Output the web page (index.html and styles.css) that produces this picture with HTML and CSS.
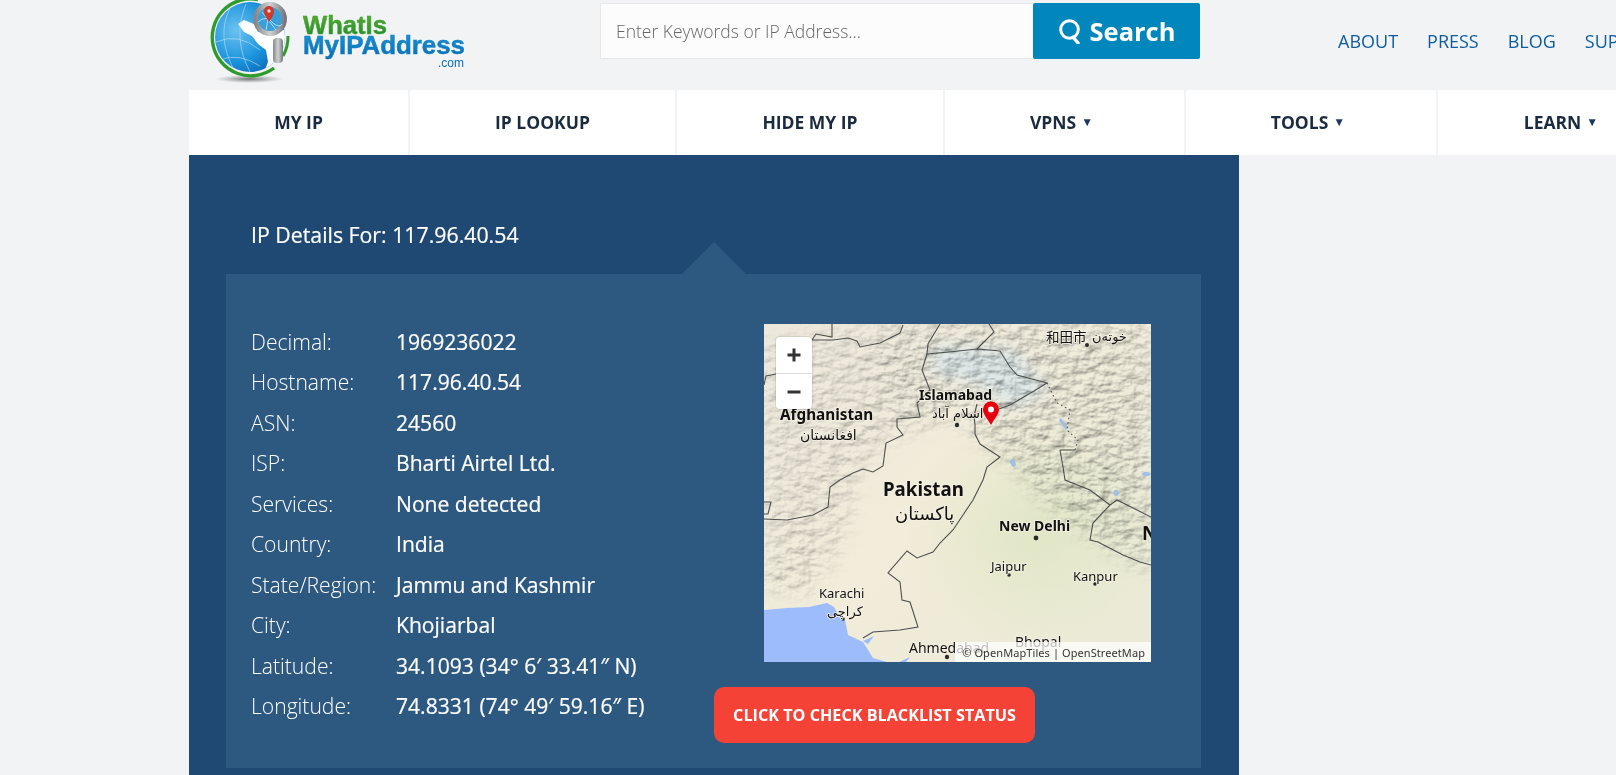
FILE: index.html
```html
<!DOCTYPE html>
<html lang="en">
<head>
<meta charset="utf-8">
<title>IP Details For: 117.96.40.54</title>
<link rel="stylesheet" href="styles.css">
</head>
<body>
<div class="page">
  <header class="top">
    <a class="logo" href="#" aria-label="WhatIsMyIPAddress.com">
      <svg class="logo-svg" width="270" height="90" viewBox="0 0 270 90">
        <defs>
          <radialGradient id="globe" cx="30%" cy="40%" r="75%">
            <stop offset="0" stop-color="#6cc2f0"/>
            <stop offset=".6" stop-color="#1b93dc"/>
            <stop offset="1" stop-color="#0c66b2"/>
          </radialGradient>
          <radialGradient id="shadow">
            <stop offset="0" stop-color="#555" stop-opacity=".8"/>
            <stop offset="1" stop-color="#777" stop-opacity="0"/>
          </radialGradient>
          <linearGradient id="steel" x1="0" x2="1" y1="0" y2="0">
            <stop offset="0" stop-color="#85888b"/>
            <stop offset=".5" stop-color="#cfd1d3"/>
            <stop offset="1" stop-color="#77797c"/>
          </linearGradient>
          <linearGradient id="wordblue" x1="0" x2="0" y1="0" y2="1">
            <stop offset="0" stop-color="#1b95d6"/>
            <stop offset="1" stop-color="#0b6cb3"/>
          </linearGradient>
          <linearGradient id="wordgreen" x1="0" x2="0" y1="0" y2="1">
            <stop offset="0" stop-color="#5cb130"/>
            <stop offset="1" stop-color="#1f8a2c"/>
          </linearGradient>
          <clipPath id="globe-clip"><circle cx="42" cy="37" r="35"/></clipPath>
        </defs>
        <ellipse cx="41" cy="79" rx="34" ry="4" fill="url(#shadow)"/>
        <circle cx="42" cy="37" r="35" fill="url(#globe)"/>
        <g clip-path="url(#globe-clip)">
          <path d="M30 24 L36 20 L46 24 L50 32 L56 32 L54 26 L62 28 L78 30 L78 72 L56 72 L60 62 L58 50 L50 44 L44 36 L36 32 Z" fill="#fff"/>
          <g fill="none" stroke="#bfe3f7" stroke-width=".7" opacity=".85">
            <path d="M8 42 Q30 32 52 50 M12 60 Q30 52 52 66 M22 8 Q8 36 26 70 M38 4 Q24 38 42 72"/>
          </g>
        </g>
        <path d="M50 -0.5 A38.5 38.5 0 1 0 66 68" fill="none" stroke="#2e9b2c" stroke-width="3.4"/>
        <path d="M80 36 A38.5 38.5 0 0 1 75 56" fill="none" stroke="#2e9b2c" stroke-width="3"/>
        <circle cx="62" cy="19" r="14.5" fill="#3a9ed8" stroke="url(#steel)" stroke-width="5"/>
        <path d="M50 22 Q58 14 66 24 Q72 28 74 24 M54 12 L68 30 M62 8 L58 30" fill="none" stroke="#cfe9f7" stroke-width=".8"/>
        <path d="M61 22 C57 16 56 14 56 11 A5 5 0 0 1 66 11 C66 14 65 16 61 22 Z" fill="#cf3a2e"/>
        <circle cx="61" cy="11" r="1.7" fill="#f5d9d0"/>
        <rect x="65" y="38" width="10" height="25" rx="4" fill="url(#steel)"/>
        <text class="logo-what" x="95" y="34" textLength="84" lengthAdjust="spacingAndGlyphs">WhatIs</text>
        <text class="logo-my" x="95" y="54" textLength="162" lengthAdjust="spacingAndGlyphs">MyIPAddress</text>
        <text class="logo-com" x="230" y="67">.com</text>
      </svg>
    </a>
    <form class="search">
      <input class="search-input" type="text" placeholder="Enter Keywords or IP Address...">
      <button class="search-btn" type="button">
        <svg class="search-icon" width="24" height="26" viewBox="0 0 24 26"><circle cx="11.5" cy="11.5" r="8.8" fill="none" stroke="#fff" stroke-width="3"/><path d="M15 19 L20 25" stroke="#fff" stroke-width="3.4" stroke-linecap="round"/></svg>
        Search
      </button>
    </form>
    <nav class="toplinks">
      <a href="#">ABOUT</a><a href="#">PRESS</a><a href="#">BLOG</a><a href="#">SUPPORT</a>
    </nav>
  </header>

  <nav class="mainnav">
    <a class="nav-cell w1" href="#">MY IP</a>
    <a class="nav-cell w2" href="#">IP LOOKUP</a>
    <a class="nav-cell w3" href="#">HIDE MY IP</a>
    <a class="nav-cell w4" href="#">VPNS<span class="caret">▼</span></a>
    <a class="nav-cell w5" href="#">TOOLS<span class="caret">▼</span></a>
    <a class="nav-cell w6" href="#">LEARN<span class="caret">▼</span></a>
  </nav>

  <main class="main">
    <h1 class="title">IP Details For: 117.96.40.54</h1>
    <section class="panel">
      <dl class="details">
        <dt>Decimal:</dt><dd>1969236022</dd>
        <dt>Hostname:</dt><dd>117.96.40.54</dd>
        <dt>ASN:</dt><dd>24560</dd>
        <dt>ISP:</dt><dd>Bharti Airtel Ltd.</dd>
        <dt>Services:</dt><dd>None detected</dd>
        <dt>Country:</dt><dd>India</dd>
        <dt>State/Region:</dt><dd>Jammu and Kashmir</dd>
        <dt>City:</dt><dd>Khojiarbal</dd>
        <dt>Latitude:</dt><dd>34.1093 (34° 6′ 33.41″ N)</dd>
        <dt>Longitude:</dt><dd>74.8331 (74° 49′ 59.16″ E)</dd>
      </dl>
      <div class="side">
        <div class="map">
          <svg class="map-svg" width="387" height="338" viewBox="0 0 387 338">
            <defs>
              <linearGradient id="land" x1="0" y1="0" x2="1" y2="1">
                <stop offset="0" stop-color="#eee8dc"/>
                <stop offset=".5" stop-color="#f2ecda"/>
                <stop offset="1" stop-color="#e9ead6"/>
              </linearGradient>
              <radialGradient id="green" cx="70%" cy="62%" r="34%">
                <stop offset="0" stop-color="#dfe6c4" stop-opacity=".9"/>
                <stop offset="1" stop-color="#dfe6c4" stop-opacity="0"/>
              </radialGradient>
              <filter id="relief" x="0" y="0" width="100%" height="100%" color-interpolation-filters="sRGB">
                <feTurbulence type="fractalNoise" baseFrequency="0.07 0.11" numOctaves="4" seed="23"/>
                <feDiffuseLighting surfaceScale="1.9" diffuseConstant="1.12" lighting-color="#f3f5f6">
                  <feDistantLight azimuth="235" elevation="60"/>
                </feDiffuseLighting>
              </filter>
              <filter id="soft"><feGaussianBlur stdDeviation="10"/></filter>
              <filter id="soft2"><feGaussianBlur stdDeviation="7"/></filter>
              <mask id="hills">
                <rect width="387" height="338" fill="#000"/>
                <g filter="url(#soft)">
                  <path d="M110 0 L387 0 L387 250 L350 225 L300 195 L265 160 L225 120 L190 90 L150 105 L120 100 Z" fill="#fff"/>
                  <path d="M0 20 L100 0 L135 105 L95 145 L75 225 L45 270 L0 270 Z" fill="#999"/>
                </g>
              </mask>
            </defs>
            <rect width="387" height="338" fill="url(#land)"/>
            <rect width="387" height="338" fill="url(#green)"/>
            <path d="M170 20 L250 25 L285 65 L250 85 L215 60 L170 50 Z" fill="#dfe8e6" filter="url(#soft2)"/>
            <rect width="387" height="338" filter="url(#relief)" mask="url(#hills)" class="relief"/>
            <path class="water" d="M0 286 L23 284 L45 283 L63 279 L70 283 L75 292 L81 296 L84 311 L99 318 L109 334 L123 338 L0 338 Z M135 338 L146 333 L142 338 Z M99 317 L110 312 L104 320 Z"/>
            <g class="lakes">
              <ellipse cx="249" cy="139" rx="2.5" ry="4" transform="rotate(-20 249 139)"/>
              <ellipse cx="352" cy="169" rx="2.5" ry="3"/>
              <ellipse cx="382" cy="150" rx="4" ry="2"/>
              <path d="M295 96 L302 106 L304 104 L297 94 Z"/>
            </g>
            <g class="border">
              <path d="M68 0 L68 13 L52 10 L48 16 L69 16 L84 14 L93 17 L96 23 L116 19 L136 9 L139 1"/>
              <path d="M0 61 L2 52 L12 50"/>
              <path d="M163 30 L185 28 L213 25 L236 27 L246 43 L253 51 L283 59 L270 67 L246 81 L235 85"/>
              <path d="M163 30 L158 46 L166 66 L153 79 L156 93 L133 95 L133 103 L139 111 L122 119 L119 142 L109 148 L99 145 L89 149 L76 156 L66 163 L64 183 L49 191 L23 196 L0 195"/>
              <path d="M213 25 L230 8 L225 0 M176 0 L164 20 L163 30"/>
              <path d="M213 80 L210 92 L211 101 L211 110 L216 120 L236 133 L223 143 L219 156 L209 176 L189 206 L176 219 L169 228 L153 234 L143 227 L124 249 L136 258 L138 276 L146 278 L154 303 L136 306 L109 308 L99 314"/>
              <path d="M0 178 L7 178 L4 190 L0 190"/>
              <path d="M299 143 L301 156 L326 166 L346 181 L353 176 L387 193"/>
              <path d="M346 181 L329 199 L326 216 L334 218 L359 231 L376 238 L387 241"/>
              <path d="M296 126 L311 126" />
              <path d="M296 126 L299 143"/>
            </g>
            <path class="border dotted" d="M283 59 L293 79 L306 86 L303 106 L314 116 L311 126"/>
            <g class="dots">
              <circle cx="193" cy="101" r="2.2"/>
              <circle cx="323" cy="21" r="2"/>
              <circle cx="272" cy="214" r="2.4"/>
              <circle cx="245" cy="251" r="1.8"/>
              <circle cx="331" cy="260" r="1.8"/>
              <circle cx="79" cy="295" r="1.8"/>
              <circle cx="183" cy="333" r="2.2"/>
            </g>
            <g class="labels">
              <text class="lb-b lb-16" x="16" y="96">Afghanistan</text>
              <text class="lb-ar lb-15" x="36" y="116">افغانستان</text>
              <text class="lb-b lb-14" x="155" y="76">Islamabad</text>
              <text class="lb-ar lb-14a" x="168" y="94">اسلام آباد</text>
              <text class="lb-b lb-20" x="119" y="172">Pakistan</text>
              <text class="lb-ar lb-19" x="131" y="196">پاکستان</text>
              <text class="lb-b lb-14" x="235" y="207">New Delhi</text>
              <text class="lb-r" x="227" y="247">Jaipur</text>
              <text class="lb-r" x="309" y="257">Kanpur</text>
              <text class="lb-r" x="55" y="274">Karachi</text>
              <text class="lb-ar lb-14a" x="63" y="292">کراچی</text>
              <text class="lb-r lb-14r" x="145" y="329">Ahmedabad</text>
              <text class="lb-r lb-14r" x="251" y="323">Bhopal</text>
              <text class="lb-b lb-20" x="378" y="216">N</text>
              <text class="lb-cjk" x="282" y="18">和田市</text>
              <text class="lb-ar lb-13" x="328" y="17">خوتەن</text>
            </g>
            <g class="pin">
              <path d="M227 101 C223 94 219 90 219 85.5 A8 8 0 0 1 235 85.5 C235 90 231 94 227 101 Z" fill="#e8000f"/>
              <circle cx="227" cy="85.5" r="3" fill="#fff"/>
            </g>
          </svg>
          <div class="zoom-ctl">
            <span class="zoom-btn">
              <svg width="16" height="16" viewBox="0 0 16 16"><path d="M8 1.5V14.5M1.5 8H14.5" stroke="#333" stroke-width="3"/></svg>
            </span>
            <span class="zoom-btn">
              <svg width="16" height="16" viewBox="0 0 16 16"><path d="M1.5 8H14.5" stroke="#333" stroke-width="3"/></svg>
            </span>
          </div>
          <div class="attrib">© OpenMapTiles | OpenStreetMap</div>
        </div>
        <a class="blacklist" href="#">CLICK TO CHECK BLACKLIST STATUS</a>
      </div>
    </section>
  </main>
</div>
</body>
</html>
```
FILE: styles.css
```css
* { box-sizing: border-box; }
html, body { margin: 0; height: 100%; overflow: hidden; }
body {
  background: #f1f3f5;
  font-family: "Open Sans", "Noto Sans", sans-serif;
  color: #fff;
}
a { text-decoration: none; }
.page { width: 1616px; padding-left: 189px; }

.top { display: flex; align-items: flex-start; height: 90px; width: 1600px; }
.logo { display: block; margin-left: 19px; width: 392px; height: 90px; flex: none; }
.logo-svg { display: block; overflow: visible; }
.logo-what { font: bold 25px "Liberation Sans", sans-serif; fill: url(#wordgreen); stroke: #3f9e2e; stroke-width: .5px; }
.logo-my { font: bold 25px "Liberation Sans", sans-serif; fill: url(#wordblue); stroke: #1280c4; stroke-width: .5px; }
.logo-com { font: 12px "Liberation Sans", sans-serif; fill: #0b6cb3; }

.search { display: flex; margin-top: 3px; height: 56px; flex: none; }
.search-input {
  width: 433px; height: 56px; padding: 0 15px;
  background: #fcfcfc; border: 1px solid #e5e7e9; border-right: 0;
  font: 300 17.5px "Open Sans", sans-serif; color: #555; outline: 0;
}
.search-input::placeholder { color: #666; opacity: 1; }
.search-btn {
  display: flex; align-items: center; justify-content: center; gap: 8px;
  width: 167px; height: 56px; padding: 0; border: 0; border-radius: 2px;
  background: #0287bc; color: #fff;
  font: bold 25.5px "Open Sans", sans-serif;
}
.toplinks { display: flex; gap: 29px; margin: 28px 0 0 138px; flex: none; }
.toplinks a { color: #0f5c9e; font-size: 18px; line-height: 26px; }

.mainnav { display: flex; gap: 2px; height: 65px; width: 1510px; }
.nav-cell {
  display: flex; align-items: center; justify-content: center; flex: none;
  padding-bottom: 2px;
  background: #fff; color: #1b2b3f;
  font-size: 17.5px; font-weight: 700;
}
.w1 { width: 219px; }
.w2 { width: 265px; }
.w3 { width: 266px; }
.w4 { width: 239px; }
.w5 { width: 250px; }
.w6 { width: 252px; }
.caret { margin-left: 5px; padding-right: 6px; font-size: 12px; color: #1c3a5f; }

.main { width: 1050px; height: 640px; padding: 65px 38px 0 37px; background: #1f4973; }
.title {
  margin: 0 0 24px 25px; font-size: 21.3px; font-weight: 400; line-height: 30px;
  -webkit-text-stroke: .2px #fff;
}
.panel {
  position: relative; display: flex; height: 494px; padding: 47px 0 0 25px;
  background: #2d5880;
}
.panel::before {
  content: ""; position: absolute; left: 456px; top: -32px;
  border: 32px solid transparent; border-top: 0; border-bottom-color: #2d5880;
}
.details {
  display: grid; grid-template-columns: 145px 1fr; grid-auto-rows: 40.5px;
  align-items: center; margin: 0; width: 463px; height: 405px; flex: none;
  font-size: 21.1px;
}
.details dt { font-weight: 300; }
.details dd { margin: 0; font-weight: 400; white-space: nowrap; -webkit-text-stroke: .2px #fff; }

.side { flex: none; width: 387px; }
.map {
  position: relative; width: 387px; height: 338px; margin: 3px 0 0 50px;
  overflow: hidden; background: #eee;
}
.map-svg { display: block; }
.relief { mix-blend-mode: multiply; }
.water { fill: #9dbcfb; }
.lakes { fill: #9dbfe8; }
.border path, .border.dotted { fill: none; stroke: #4c504e; stroke-width: 1.1; }
.border.dotted { stroke-dasharray: 1.5 3; }
.dots { fill: #2b2b2b; }
.labels text {
  fill: #111; stroke: #f6f1e6; stroke-opacity: .75; stroke-width: 2px;
  paint-order: stroke; stroke-linejoin: round;
}
.lb-b { font: 700 14px "Noto Sans", sans-serif; }
.lb-r { font: 400 13px "Noto Sans", sans-serif; }
.lb-16 { font-size: 15.3px; }
.lb-14 { font-size: 14px; }
.lb-14r { font-size: 14px; }
.lb-20 { font-size: 18.7px; }
.lb-ar { font-family: "DejaVu Sans", sans-serif; }
.lb-13 { font-size: 13px; }
.lb-14a { font-size: 13px; }
.lb-15 { font-size: 14px; }
.lb-19 { font-size: 18px; }
.lb-cjk { font: 13.5px "Noto Sans CJK SC", sans-serif; }

.zoom-ctl {
  position: absolute; left: 12px; top: 13px; display: flex; flex-direction: column;
  width: 36px; background: #fff; border-radius: 4px;
  box-shadow: 0 0 0 1px rgba(0,0,0,.08);
}
.zoom-btn { display: flex; align-items: center; justify-content: center; height: 36px; }
.zoom-btn + .zoom-btn { border-top: 1px solid #ddd; }
.attrib {
  position: absolute; right: 0; bottom: 0; width: 196px; height: 20px; padding-right: 6px;
  background: rgba(255,255,255,.72); color: #333;
  font: 11px/22px "Noto Sans", sans-serif; letter-spacing: .08px; text-align: right; white-space: nowrap;
}
.blacklist {
  display: flex; align-items: center; justify-content: center;
  width: 321px; height: 56px; margin-top: 25px;
  background: #f44336; border-radius: 10px; color: #fff;
  font-size: 16.2px; font-weight: 700;
}
```
